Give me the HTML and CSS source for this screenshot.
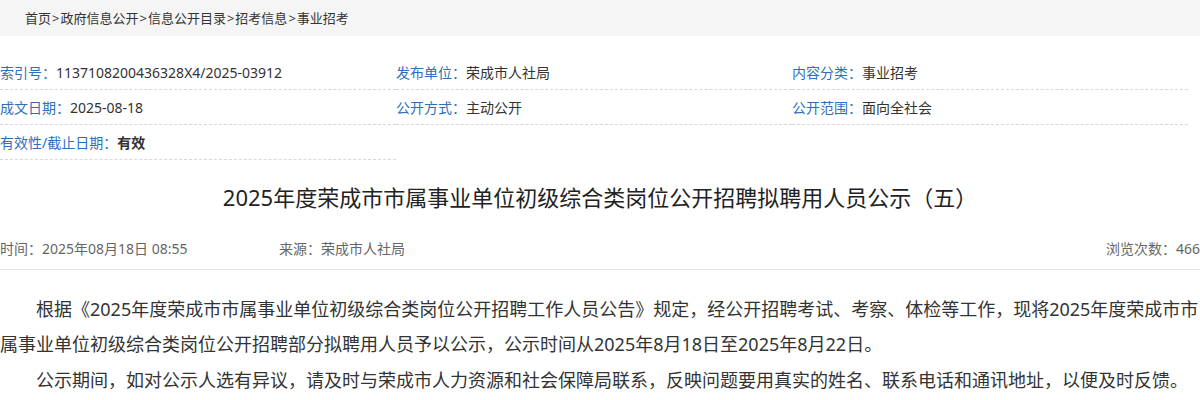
FILE: index.html
```html
<!DOCTYPE html>
<html lang="zh-CN">
<head>
<meta charset="utf-8">
<title>拟聘用人员公示</title>
<link rel="stylesheet" href="styles.css">
</head>
<body>
<div class="crumb">首页<span class="sep">&gt;</span>政府信息公开<span class="sep">&gt;</span>信息公开目录<span class="sep">&gt;</span>招考信息<span class="sep">&gt;</span>事业招考</div>
<div class="meta">
  <div class="item"><span class="lab">索引号：</span>1137108200436328X4/2025-03912</div>
  <div class="item"><span class="lab">发布单位：</span>荣成市人社局</div>
  <div class="item"><span class="lab">内容分类：</span>事业招考</div>
  <div class="item"><span class="lab">成文日期：</span>2025-08-18</div>
  <div class="item"><span class="lab">公开方式：</span>主动公开</div>
  <div class="item"><span class="lab">公开范围：</span>面向全社会</div>
  <div class="item"><span class="lab">有效性/截止日期：</span><b>有效</b></div>
</div>
<h1 class="title">2025年度荣成市市属事业单位初级综合类岗位公开招聘拟聘用人员公示（五）</h1>
<div class="info">
  <span class="time">时间：2025年08月18日 08:55</span>
  <span class="src">来源：荣成市人社局</span>
  <span class="views">浏览次数：466</span>
</div>
<div class="content">
  <p>根据《2025年度荣成市市属事业单位初级综合类岗位公开招聘工作人员公告》规定，经公开招聘考试、考察、体检等工作，现将2025年度荣成市市属事业单位初级综合类岗位公开招聘部分拟聘用人员予以公示，公示时间从2025年8月18日至2025年8月22日。</p>
  <p>公示期间，如对公示人选有异议，请及时与荣成市人力资源和社会保障局联系，反映问题要用真实的姓名、联系电话和通讯地址，以便及时反馈。</p>
</div>
</body>
</html>
```
FILE: styles.css
```css
html, body {
  margin: 0;
  padding: 0;
  background: #fff;
}
body {
  font-family: "Noto Sans", "Noto Sans CJK SC", sans-serif;
  color: #333;
  width: 1200px;
  overflow: hidden;
}
.crumb {
  height: 36px;
  line-height: 36px;
  background: #f5f5f5;
  padding-left: 25px;
  font-size: 13px;
  color: #333;
}
.sep {
  padding: 0 1px;
}
.meta {
  margin-top: 19px;
  display: grid;
  grid-template-columns: 396px 396px 396px;
}
.item {
  height: 34px;
  line-height: 35px;
  border-bottom: 1px dashed #d8d8d8;
  font-size: 14px;
  color: #333;
  white-space: nowrap;
}
.item b {
  font-weight: bold;
  color: #333;
}
.lab {
  color: #2f6fba;
}
.title {
  margin: 22px 0 0;
  font-size: 22px;
  line-height: 30px;
  font-weight: normal;
  text-align: center;
  color: #222;
}
.info {
  display: flex;
  padding: 27px 0 10px;
  line-height: 20px;
  font-size: 14px;
  color: #666;
  border-bottom: 1px solid #e2e2e2;
}
.time {
  width: 279px;
}
.views {
  margin-left: auto;
}
.content {
  padding-top: 22px;
  font-size: 18px;
  line-height: 35px;
  color: #333;
}
.content p {
  margin: 0 0 1px;
  text-indent: 2em;
}
```
